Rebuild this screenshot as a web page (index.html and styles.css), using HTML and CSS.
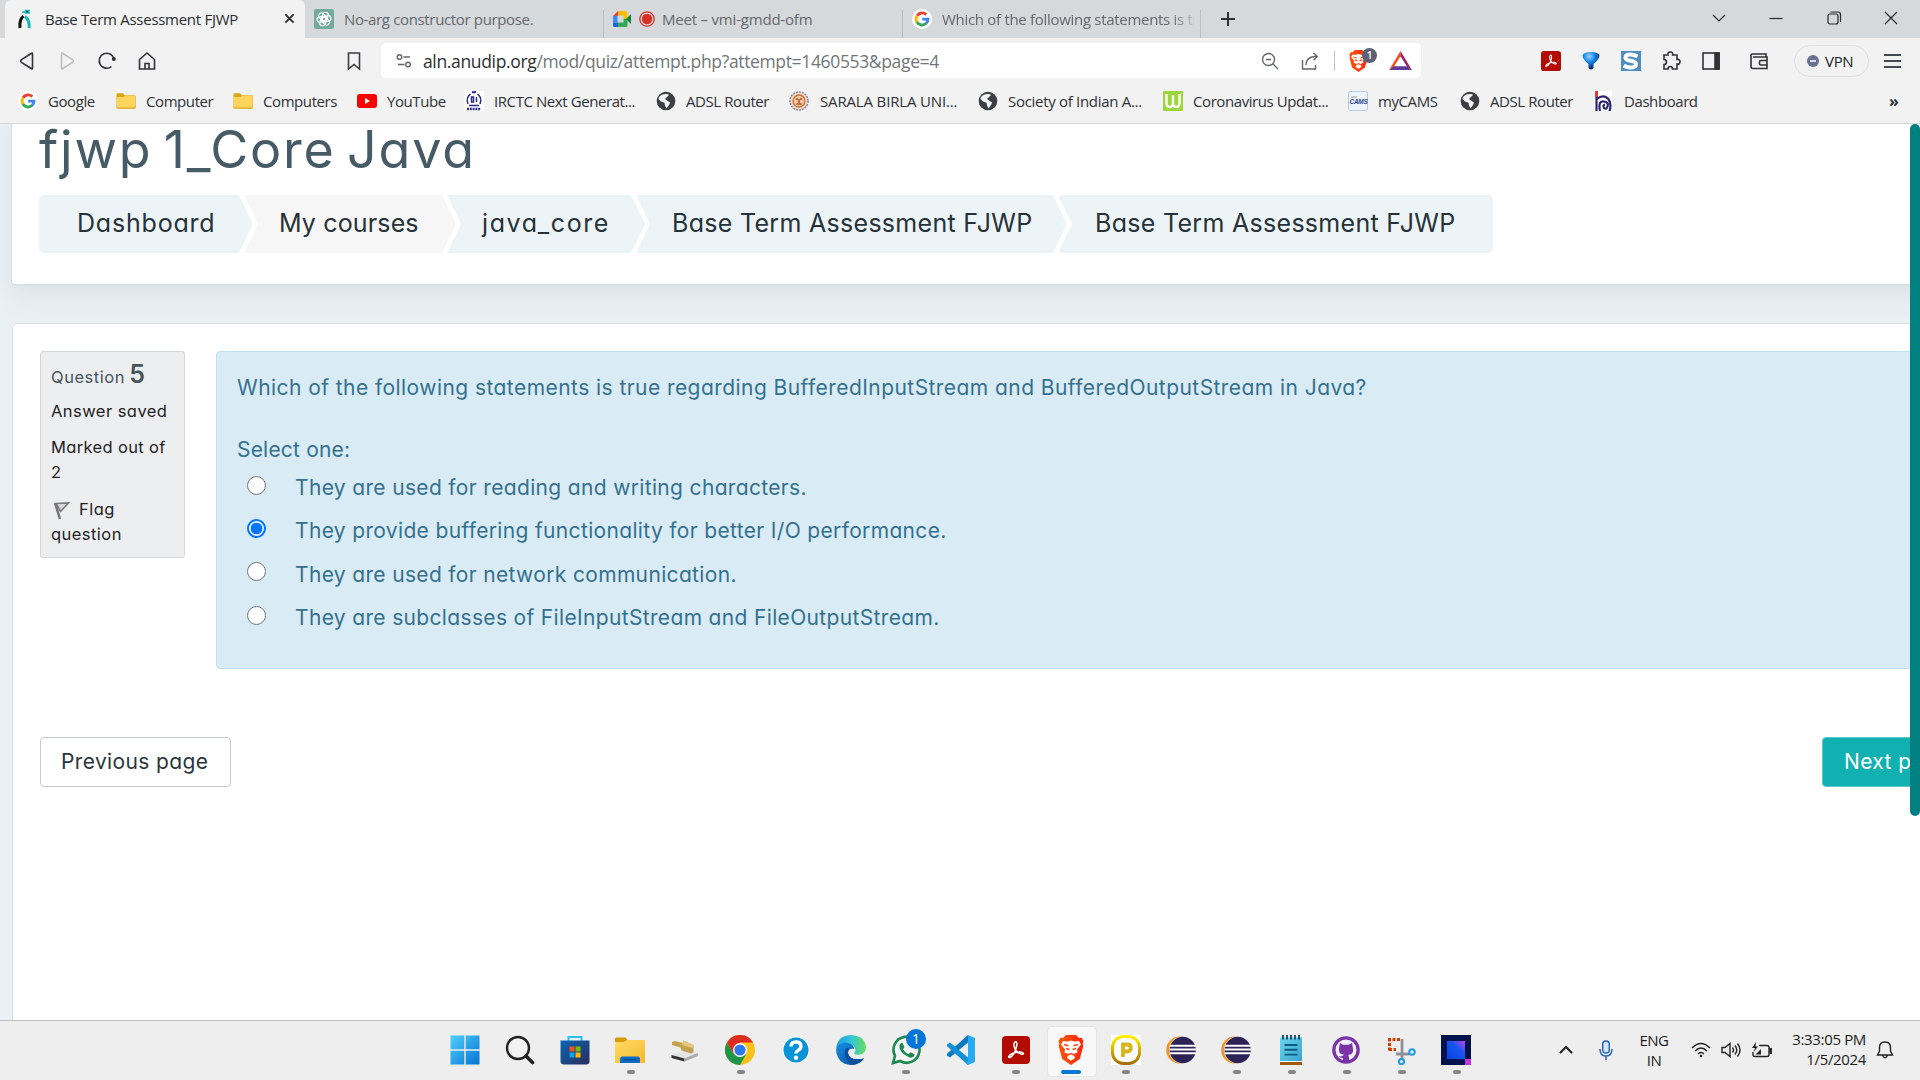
FILE: index.html
```html
<!DOCTYPE html>
<html lang="en">
<head>
<meta charset="utf-8">
<title>Base Term Assessment FJWP</title>
<link rel="stylesheet" href="styles.css">
</head>
<body>
<svg class="defs" aria-hidden="true">
  <defs>
    <linearGradient id="gWin" x1="0" y1="0" x2="1" y2="1"><stop offset="0" stop-color="#4fd0fb"/><stop offset="1" stop-color="#0573d3"/></linearGradient>
    <linearGradient id="gFold" x1="0" y1="0" x2="1" y2="1"><stop offset="0" stop-color="#ffdc68"/><stop offset="1" stop-color="#f6b92c"/></linearGradient>
    <linearGradient id="gStore" x1="0" y1="0" x2="1" y2="1"><stop offset="0" stop-color="#0b66b4"/><stop offset="1" stop-color="#2a2c58"/></linearGradient>
    <linearGradient id="gBrave" x1="0" y1="0" x2="1" y2="0"><stop offset="0" stop-color="#ff5601"/><stop offset="1" stop-color="#ff2410"/></linearGradient>
    <linearGradient id="gEdge" x1="0" y1=".3" x2="1" y2=".3"><stop offset="0" stop-color="#1c9be0"/><stop offset=".5" stop-color="#33c3dc"/><stop offset="1" stop-color="#68e05a"/></linearGradient>
    <linearGradient id="gEdge2" x1="0" y1="0" x2="1" y2="1"><stop offset="0" stop-color="#1690e0"/><stop offset="1" stop-color="#0c479c"/></linearGradient>
    <linearGradient id="gP" x1="0" y1="0" x2="0" y2="1"><stop offset="0" stop-color="#fff000"/><stop offset="1" stop-color="#a87000"/></linearGradient>
    <linearGradient id="gNote" x1="0" y1="0" x2="1" y2="1"><stop offset="0" stop-color="#6cd6ee"/><stop offset="1" stop-color="#36a3cc"/></linearGradient>
    <linearGradient id="gBlue" x1="0" y1="1" x2="1" y2="0"><stop offset="0" stop-color="#0b3fe0"/><stop offset=".6" stop-color="#1557ee"/><stop offset="1" stop-color="#c53df0"/></linearGradient>
    <radialGradient id="gPin" cx=".4" cy=".25" r=".7"><stop offset="0" stop-color="#8fd6ff"/><stop offset=".5" stop-color="#1280e0"/><stop offset="1" stop-color="#052e6a"/></radialGradient>
  </defs>
  <symbol id="google" viewBox="0 0 20 20"><circle cx="10" cy="10" r="10" fill="#fff"/><g fill="none" stroke-width="2.9"><path d="M5 6.8A6 6 0 0 1 14.3 5.6" stroke="#ea4335"/><path d="M5 13.2A6 6 0 0 1 5 6.8" stroke="#fbbc05"/><path d="M14.2 14.3A6 6 0 0 1 4.9 13.1" stroke="#34a853"/><path d="M10.2 10.1H16A6 6 0 0 1 14 14.5" stroke="#4285f4"/></g></symbol>
  <symbol id="folder" viewBox="0 0 20 16"><path d="M.5 1.5Q.5.3 1.6.3H7l1.7 1.9h10q1 0 1 1V15q0 .8-1 .8H1.500q-1 0-1-1z" fill="#dba614"/><path d="M.8 4H7.500L9 2.600h10.200V14.500H.8z" fill="#fdd45c"/></symbol>
  <symbol id="globe" viewBox="0 0 20 20"><circle cx="10" cy="10" r="9.300" fill="#3b3f44"/><path d="M3 6Q5.500 3 9.500 3q3-.2 3.500 1L10.500 6.500 9 8l3 1.200L14.500 11 13 14l-2.500 3.500L9 14.500 8.500 11.800 5 10.500 2.500 8z" fill="#f2f2f2"/><path d="M9.500 8.200q3-1.600 6.500.8l2 2q-1 4-4 6 2-3 .5-5z" fill="#3b3f44"/></symbol>
  <symbol id="pdf" viewBox="0 0 28 28"><rect width="28" height="28" rx="4" fill="#b30b00"/><path d="M13 6c1.800-1 2.500 1.500 1.200 6-1 3.500-3.500 8-6.200 9.500-2.500.5-1.700-2.300 3.200-4.200 4.500-1.700 9.300-1.800 10.200 0 .3 1.700-3.200 1.200-6-1.300C12.800 13.500 11.800 10 12 7.500z" fill="none" stroke="#fff" stroke-width="1.500"/></symbol>
  <symbol id="lion" viewBox="0 0 26 30"><path d="M8 0h10l3 3 2.500-.2L25.500 6l-.8 3 .6 2-3.500 13L13 30 4.200 24 .7 11l.6-2-.8-3 2-3.200L5 3z" fill="url(#gBrave)"/><path d="M5 6l4.500.5 3.500-1 3.500 1L21 6l2 3.500-4 5 .5 3-4 1.500 1.500 4-4 2.800L9 23l1.500-4-4-1.500.5-3-4-5z" fill="#fff"/><path d="M6 9.500l4.500 1.300M20 9.500l-4.500 1.300M8 13.500l3.500 1M18 13.500l-3.500 1M10 20l3-1.500 3 1.500" stroke="#ff4310" stroke-width="1.500" fill="none"/></symbol>
  <symbol id="eclipse" viewBox="0 0 30 30"><circle cx="13.800" cy="15" r="13.600" fill="#f7931e"/><circle cx="16.500" cy="15" r="13.600" fill="#f0ecec"/><circle cx="16.700" cy="15" r="13.200" fill="#2c2255"/><path d="M4 10.800h26M3.500 14.500H30M3.700 18.200H30" stroke="#fff" stroke-width="2"/></symbol>
</svg>

<header class="browser">
  <div class="tabs">
    <div class="tab active">
      <svg class="fav" viewBox="0 0 16 20"><path d="M6 7Q1.500 11 2.500 19" stroke="#111" stroke-width="3" fill="none"/><path d="M7.500 7.500q5 4 4 11.500" stroke="#18b7b7" stroke-width="3" fill="none"/><path d="M4.500 3h4M8 1.500h3.500v2.500H8z" stroke="#18b7b7" stroke-width="1.600"/></svg>
      <span class="title t1">Base Term Assessment FJWP</span>
      <svg class="x" viewBox="0 0 12 12"><path d="M1.500 1.500l9 9M10.500 1.500l-9 9" stroke="#2b2d30" stroke-width="2"/></svg>
    </div>
    <div class="tab">
      <svg class="fav gpt" viewBox="0 0 20 20"><rect width="20" height="20" rx="2" fill="#74aa9c"/><g fill="none" stroke="#fff" stroke-width="1.100"><rect x="7.700" y="3" width="5.500" height="9" rx="2.700" transform="rotate(15 10 10)"/><rect x="7.700" y="3" width="5.500" height="9" rx="2.700" transform="rotate(75 10 10)"/><rect x="7.700" y="3" width="5.500" height="9" rx="2.700" transform="rotate(135 10 10)"/><rect x="7.700" y="3" width="5.500" height="9" rx="2.700" transform="rotate(195 10 10)"/><rect x="7.700" y="3" width="5.500" height="9" rx="2.700" transform="rotate(255 10 10)"/><rect x="7.700" y="3" width="5.500" height="9" rx="2.700" transform="rotate(315 10 10)"/></g></svg>
      <span class="title t2">No-arg constructor purpose.</span>
    </div>
    <div class="tab line">
      <svg class="fav meet" viewBox="0 0 19 16"><path d="M5 0v5H0z" fill="#ea4335"/><path d="M5 0h8q1.500 0 1.500 1.500V8h-4V4.500H5z" fill="#fbbc04"/><path d="M0 5h4.500v6.500H0z" fill="#4285f4"/><path d="M0 11.500h5V16H1.500Q0 16 0 14.500z" fill="#1967d2"/><path d="M5 11.500h5.500V8h4v6.500q0 1.500-1.500 1.500H5z" fill="#34a853"/><path d="M13 8l5-5v10z" fill="#188038"/></svg>
      <svg class="rec" viewBox="0 0 16 16"><circle cx="8" cy="8" r="7.200" fill="none" stroke="#d93025" stroke-width="1.300"/><circle cx="8" cy="8" r="5.200" fill="#d93025"/></svg>
      <span class="title t3">Meet – vmi-gmdd-ofm</span>
    </div>
    <div class="tab line">
      <svg class="fav goog"><use href="#google"/></svg>
      <span class="title t4">Which of the following statements is tr</span>
    </div>
    <div class="newtab"><svg viewBox="0 0 16 16"><path d="M8 1v14M1 8h14" stroke="#2d2f33" stroke-width="2"/></svg></div>
    <div class="winctl">
      <svg viewBox="0 0 16 16"><path d="M2 5l6 6 6-6" /></svg>
      <svg viewBox="0 0 16 16"><path d="M1.500 8.500h13"/></svg>
      <svg viewBox="0 0 16 16"><rect x="2" y="4" width="10" height="10" rx="2"/><path d="M4.500 2H12q2.500 0 2.500 2.500V12"/></svg>
      <svg viewBox="0 0 16 16"><path d="M2 2l12 12M14 2L2 14"/></svg>
    </div>
  </div>

  <div class="toolbar">
    <div class="nav">
      <svg viewBox="0 0 20 20"><path d="M15.500 3v14q0 1.500-1.400.5L4.500 11.300q-1.700-1.300 0-2.600L14.100 2.500q1.400-1 1.400.5z"/></svg>
      <svg class="off" viewBox="0 0 20 20"><path d="M4.500 3v14q0 1.500 1.400.5l9.600-6.200q1.700-1.300 0-2.600L5.900 2.500Q4.500 1.500 4.500 3z"/></svg>
      <svg viewBox="0 0 20 20"><path d="M14.500 15.500A7.500 7.500 0 1 1 17 8"/><circle cx="16.800" cy="8" r="2" fill="#303236" stroke="none"/></svg>
      <svg viewBox="0 0 20 20"><path d="M2.500 8.500L10 2l7.500 6.500V18h-15z"/><path d="M8 18v-5.500h4V18"/></svg>
    </div>
    <svg class="bm" viewBox="0 0 14 20"><path d="M1.500 2h11v16L7 13.500 1.500 18z"/></svg>
    <div class="address">
      <svg class="tune" viewBox="0 0 16 16"><circle cx="3.500" cy="4" r="2.300"/><path d="M7.500 4H14M2 11.500h6.500"/><circle cx="12" cy="11.500" r="2.300"/></svg>
      <span class="url"><b>aln.anudip.org</b>/mod/quiz/attempt.php?attempt=1460553&amp;page=4</span>
      <svg class="ic" viewBox="0 0 18 18"><circle cx="7.500" cy="7.500" r="6"/><path d="M12 12l5 5M5 7.500h5"/></svg>
      <svg class="ic share" viewBox="0 0 18 18"><path d="M1.500 8v9h13v-4M5 13q0-8 9-8.500h2M12.500 1l3.800 3.500-3.800 3.700"/></svg>
      <i class="sep"></i>
      <span class="shield"><svg viewBox="0 0 26 30"><use href="#lion"/></svg><em>1</em></span>
      <svg class="bat" viewBox="0 0 24 20"><path d="M12 0L0 20l5-3.500L12 5.500z" fill="#ff4a12"/><path d="M12 0l12 20-5-3.500-7-11z" fill="#9e1f63"/><path d="M0 20l5-4h14l5 4z" fill="#5f3b96"/></svg>
    </div>
    <div class="ext">
      <svg viewBox="0 0 28 28"><use href="#pdf"/></svg>
      <svg viewBox="0 0 20 20"><path d="M1.500 4.500Q2.500 1 10 1t8.500 3.500Q18.500 8 12.500 13v4q-2.500 3-5 0v-4Q1.500 8 1.500 4.500z" fill="url(#gPin)"/></svg>
      <svg viewBox="0 0 20 20"><path d="M0 0h20v20H0z" fill="#4c8dc4"/><path d="M16.500 5.500Q13 3.500 9 3.500q-4.500 0-4.500 3.200Q4.500 9 9.500 9.800q5.500.8 5.500 3.500 0 3.200-6 3.200-3.500 0-6.300-2" fill="none" stroke="#fff" stroke-width="4"/></svg>
      <svg class="st" viewBox="0 0 20 20"><path d="M3 4h4q-.7-3 2.300-3t2.300 3H16v4.500q3-.5 3 2.300t-3 2.200V18h-4.500q0-2.500-2.200-2.500T7 18H3v-4.500q2.500 0 2.500-2.500T3 8.500z"/></svg>
      <svg class="st" viewBox="0 0 20 20"><rect x="2" y="2" width="16" height="16"/><path d="M14 2h4v16h-4z" fill="#303236"/></svg>
      <svg class="st" viewBox="0 0 20 20"><path d="M17 6V3H3.500Q2 3 2 4.500v11Q2 17.500 4 17.500h14V6H4M18 9.500h-6q-1.500 0-1.500 1.500v1.500q0 1.500 1.500 1.500h6"/></svg>
    </div>
    <div class="vpn"><svg viewBox="0 0 12 12"><circle cx="6" cy="6" r="6" fill="#6b7093"/><path d="M3 6h6" stroke="#fff" stroke-width="1.500"/></svg><span>VPN</span></div>
    <svg class="menu" viewBox="0 0 18 16"><path d="M0 2h17M0 8h17M0 14h17"/></svg>
  </div>

  <nav class="bookmarks">
    <a><svg><use href="#google"/></svg>Google</a>
    <a><svg class="fo"><use href="#folder"/></svg>Computer</a>
    <a><svg class="fo"><use href="#folder"/></svg>Computers</a>
    <a><svg viewBox="0 0 20 14"><rect width="20" height="14" rx="3" fill="#f00"/><path d="M8 4l5 3-5 3z" fill="#fff"/></svg>YouTube</a>
    <a><svg viewBox="0 0 20 20"><path d="M0 0h20v20H0z" fill="#fff"/><path d="M4 13Q1.500 7 6.500 3M16 13q2.500-6-2.500-10M5 14.500h10" fill="none" stroke="#2b2a86" stroke-width="1.500"/><path d="M8 1.200h4" stroke="#2b2a86" stroke-width="2"/><path d="M7.500 6h2v5h-2zM12.500 6v5" stroke="#2b2a86" stroke-width="1.500" fill="none"/><path d="M3 18h14" stroke="#2b2a86" stroke-width="2.500" stroke-dasharray="2 .8"/></svg>IRCTC Next Generat...</a>
    <a><svg><use href="#globe"/></svg>ADSL Router</a>
    <a><svg viewBox="0 0 20 20"><circle cx="10" cy="10" r="9" fill="#f2ded0" stroke="#8f8290" stroke-width="1.600" stroke-dasharray="2 1"/><circle cx="10" cy="10" r="6" fill="#f6c79c" stroke="#c4703c" stroke-width="1.300"/><path d="M7 8h2M11 8h2M10 8v4M7.500 13h5" stroke="#b24d20" stroke-width="1.500"/></svg>SARALA BIRLA UNI...</a>
    <a><svg><use href="#globe"/></svg>Society of Indian A...</a>
    <a><svg viewBox="0 0 20 20"><rect width="20" height="20" rx="1" fill="#9bd63b"/><path d="M3.500 3v9q0 4 3.300 4T10 12V4v8q0 4 3.200 4t3.300-4V3" fill="none" stroke="#fff" stroke-width="2.400"/></svg>Coronavirus Updat...</a>
    <a><svg viewBox="0 0 20 20"><rect x=".5" y=".5" width="19" height="19" rx="2" fill="#eef4fc" stroke="#b5cbe6"/><text x="1.500" y="13" class="cams">CAMS</text><path d="M3 6h6" stroke="#999"/></svg>myCAMS</a>
    <a><svg><use href="#globe"/></svg>ADSL Router</a>
    <a><svg viewBox="0 0 20 20"><path d="M0 0h18v20H0z" fill="#fff"/><path d="M2.500 20V6M3 8q6-5 11-.5 4 5 1.500 12.500M6 20Q4 10 9.500 10.500t4 5Q12.500 19 10 17q-1.500-3 1-3.500" fill="none" stroke="#2a2472" stroke-width="2.200"/><path d="M2.500 0v6" stroke="#e53935" stroke-width="3"/></svg>Dashboard</a>
    <span class="more">»</span>
  </nav>
</header>

<main class="page">
  <section class="card head">
    <h1>fjwp 1_Core Java</h1>
    <ol class="crumbs">
      <li class="c1">Dashboard</li>
      <li class="c2">My courses</li>
      <li class="c3">java_core</li>
      <li class="c4">Base Term Assessment FJWP</li>
      <li class="c5">Base Term Assessment FJWP</li>
    </ol>
  </section>
  <section class="card body">
    <div class="que">
      <div class="info">
        <p class="no">Question <b>5</b></p>
        <p class="state">Answer saved</p>
        <p class="grade">Marked out of<br>2</p>
        <p class="flag"><svg viewBox="0 0 20 20"><path d="M4 3l5 16" stroke="#777" stroke-width="2.500"/><path d="M5 3.500l12.500-.5-8 8.500z" fill="#d5d7d8" stroke="#7a7a7a" stroke-width="1.600"/></svg>Flag<br>question</p>
      </div>
      <div class="formulation">
        <p class="qtext">Which of the following statements is true regarding BufferedInputStream and BufferedOutputStream in Java?</p>
        <p class="prompt">Select one:</p>
        <label class="opt"><i></i>They are used for reading and writing characters.</label>
        <label class="opt on"><i></i>They provide buffering functionality for better I/O performance.</label>
        <label class="opt"><i></i>They are used for network communication.</label>
        <label class="opt"><i></i>They are subclasses of FileInputStream and FileOutputStream.</label>
      </div>
    </div>
    <div class="actions">
      <button class="btn prev">Previous page</button>
      <button class="btn next">Next page</button>
    </div>
  </section>
  <div class="scrollbar"></div>
</main>

<footer class="taskbar">
  <div class="apps">
    <span><svg viewBox="0 0 30 30"><path d="M.5.500h13.800v13.800H.5zM15.700.500h13.800v13.800H15.700zM.5 15.700h13.800v13.800H.5zM15.700 15.700h13.800v13.800H15.700z" fill="url(#gWin)"/></svg></span>
    <span><svg viewBox="0 0 30 30" fill="none" stroke="#222"><circle cx="13" cy="13" r="11" fill="#f2f2f2" stroke-width="2.400"/><path d="M21 21l6.500 6.500" stroke-width="3.600" stroke-linecap="round"/></svg></span>
    <span><svg viewBox="0 0 30 30"><path d="M8.500 7V2h13v5" fill="none" stroke="#2bc0f4" stroke-width="2"/><path d="M.5 5.500h29V26q0 3.500-3.500 3.500H4Q.5 29.500.5 26z" fill="url(#gStore)"/><path d="M9.500 11.500h5v5h-5z" fill="#f25022"/><path d="M15.500 11.500h5v5h-5z" fill="#7fba00"/><path d="M9.500 17.500h5v5h-5z" fill="#00a4ef"/><path d="M15.500 17.500h5v5h-5z" fill="#ffb900"/></svg></span>
    <span class="run"><svg viewBox="0 0 30 30"><path d="M0 4q0-1.500 1.500-1.500h9L13 5.500V9H0z" fill="#d99a09"/><path d="M0 7h9l3-2h17q1 0 1 1v22H0z" fill="url(#gFold)"/><path d="M5 28v-4q0-2.500 2.500-2.500h15q2.500 0 2.500 2.500v4z" fill="#0a6bc4"/><path d="M8.500 24.700h13" stroke="#084a8c" stroke-width="1.200"/></svg></span>
    <span><svg viewBox="0 0 30 30"><path d="M1.500 20l13-4.500 13.500 2.500-13 6z" fill="#e3e3e3"/><path d="M1.500 20v3l13 3.500v-3z" fill="#333"/><path d="M14.500 26.500v-3L28 18v3z" fill="#aaa"/><path d="M2 7l3-1 8 2V5.500l10.500 4.500v7l-2 1.500-10-3-1-3L2 10z" fill="#c4a14e"/><path d="M13 5.500L23.500 10v3.500L12 10z" fill="#e3c87e"/></svg></span>
    <span class="run"><svg viewBox="0 0 30 30"><circle cx="15" cy="15" r="15" fill="#fbc116"/><path d="M2 7.500A15 15 0 0 0 15 30l6.500-11.300H8.500z" fill="#1e9547"/><path d="M2 7.500A15 15 0 0 1 28 7.500H15L8.500 18.700z" fill="#de2c20"/><circle cx="15" cy="15" r="7" fill="#fff"/><circle cx="15" cy="15" r="5.600" fill="#2f79ee"/></svg></span>
    <span><svg viewBox="0 0 30 30"><circle cx="15" cy="15" r="13.500" fill="#fff"/><circle cx="15" cy="15" r="12.500" fill="#0693d8"/><path d="M10 11.500q0-4.500 5-4.500t5 4.200q0 2.300-2.600 4-2.400 1.500-2.400 3.300" fill="none" stroke="#fff" stroke-width="3.400"/><circle cx="15" cy="22.800" r="2.200" fill="#fff"/></svg></span>
    <span><svg viewBox="0 0 30 30"><path d="M0 14Q1.500 0 15.500 0 29 1 30 12q0 7-7 7.800-4.500 0-5-1.300 3-3.500-.5-7.500Q8 4 0 14z" fill="url(#gEdge)"/><path d="M0 14Q4 6 12.500 8q5.500 1.700 5.500 6-6-1-6 4 1 8 16 5.500Q23 30 15 30 1 29 0 14z" fill="url(#gEdge2)"/><path d="M9.500 14q-3.500 9 6 16 8 0 12.500-6.500-14 4-16-5.500-.1-3 1.500-4.500-3-1-4 .5z" fill="#0d4f9f"/></svg></span>
    <span class="run wa"><svg viewBox="0 0 30 30"><path d="M2 28l2-7.200A13 13 0 1 1 9 26z" fill="#f5f5f5" stroke="#1a8a50" stroke-width="2.600"/><path d="M9.500 8.500l2-.7 2 4.500-1.500 2q2 3.700 5.500 5l2-2 4 2-.5 2q-2 2-5 1Q10.500 19 8.500 13q-.5-3 1-4.500z" fill="#1a8a50"/></svg><em>1</em></span>
    <span><svg viewBox="0 0 30 30"><path d="M22 0v7.500L4 22.500l-3-2v-1.700L22 0z" fill="#0a7ac2"/><path d="M22 30v-7.500L4 7.500l-3 2v1.700L22 30z" fill="#1390da"/><path d="M22 0l7 3v24l-7 3-2-1.500L22 26z" fill="#27aaf2"/></svg></span>
    <span class="run"><svg class="s28"><use href="#pdf"/></svg></span>
    <span class="run cur"><svg viewBox="0 0 26 30"><use href="#lion"/></svg></span>
    <span class="run"><svg viewBox="0 0 30 30"><path d="M0 0h30v30H0z" fill="#fff"/><rect x="1.500" y="1.500" width="27" height="27" rx="11" fill="#fff" stroke="url(#gP)" stroke-width="3"/><path d="M12 22V9.500h4.300q3.500 0 3.500 3.500t-3.500 3.500H12" fill="none" stroke="#d9b51c" stroke-width="3.800"/></svg></span>
    <span><svg><use href="#eclipse"/></svg></span>
    <span class="run"><svg><use href="#eclipse"/></svg></span>
    <span class="run"><svg viewBox="0 0 30 30"><path d="M4 2.500h22V27H4z" fill="url(#gNote)"/><path d="M4 27h22v3H4z" fill="#a2560e"/><path d="M4 26.500h22" stroke="#fff"/><path d="M8.500 10h13M8.500 14.800h13M8.500 19.600h13" stroke="#0b5d82" stroke-width="1.900"/><path d="M7 0v4.500M11 0v4.500M15 0v4.500M19 0v4.500M23 0v4.500" stroke="#12506e" stroke-width="1.900"/></svg></span>
    <span class="run"><svg viewBox="0 0 30 30"><circle cx="15" cy="15" r="13.800" fill="#7a33a8"/><circle cx="15" cy="15" r="10.500" fill="#f4effa"/><path d="M9 8l3 1.700h6L21 8l.8 4.500q1.500 7-4.600 7.500l.8 2V26h-6v-3q-3 .5-4-2 2 1 4-.5l.8-.9Q6.600 19 8.200 12.500z" fill="#7a33a8"/></svg></span>
    <span class="run"><svg viewBox="0 0 30 30"><path d="M3.500 15.500V4.500M2 4.500h13M3 14.500h7" fill="none" stroke="#d83b01" stroke-width="3" stroke-dasharray="3 1.500"/><path d="M16 4v15h7.500M16 19h-6M16 19v5" fill="none" stroke="#8d9296" stroke-width="2.800"/><circle cx="26" cy="17" r="2.700" fill="none" stroke="#1c9be6" stroke-width="2"/><circle cx="15.500" cy="26.500" r="2.600" fill="none" stroke="#1c9be6" stroke-width="2"/></svg></span>
    <span class="run"><svg viewBox="0 0 30 30"><path d="M0 0h30v30H0z" fill="#04124a"/><path d="M6 6h18v18H6z" fill="url(#gBlue)"/><path d="M24 24h6v6h-6z" fill="#c235e0"/></svg></span>
  </div>
  <div class="tray">
    <svg class="up" viewBox="0 0 14 14"><path d="M1 10l6-6 6 6"/></svg>
    <svg class="mic" viewBox="0 0 14 20"><rect x="3.700" y="1" width="6.600" height="12" rx="3.300" fill="#d7e4f5"/><path d="M1 9q0 7 6 7t6-7M7 16v4"/></svg>
    <div class="lang">ENG<br>IN</div>
    <svg class="wifi" viewBox="0 0 20 16"><path d="M1 6Q10-3 19 6M4 9Q10 3 16 9M7 12Q10 9 13 12"/><circle cx="10" cy="14" r="1.300" fill="#222" stroke="none"/></svg>
    <svg class="snd" viewBox="0 0 20 16"><path d="M1 5.500h3l5-4v13l-5-4H1zM11.500 5.500q2 2.500 0 5M14 3.500q3.500 4.500 0 9M16.500 1.500q5 6.500 0 13"/></svg>
    <svg class="pow" viewBox="0 0 22 16"><path d="M8 3.500h8q2 0 2 2v7q0 2-2 2H4q-2 0-2-2V10"/><path d="M19.700 6v6" stroke-width="2.500"/><path d="M5 0L1 6h3L2.500 10 7 4.500H4.500zM4.500 12.500L10 7v5.500z" fill="#222" stroke="none"/></svg>
    <div class="clock">3:33:05 PM<br>1/5/2024</div>
    <svg class="bell" viewBox="0 0 18 20"><path d="M1.500 15L3.500 11V7.500Q3.500 2 9 2t5.500 5.500V11l2 4zM6.500 15.500Q9 20 11.500 15.500"/></svg>
  </div>
</footer>
</body>
</html>
```
FILE: styles.css
```css
* { box-sizing: border-box; }
body { margin: 0; width: 1920px; height: 1080px; overflow: hidden; display: flex; flex-direction: column; font-family: "Open Sans", "Noto Sans", sans-serif; font-size: 15px; color: #2f3135; background: #fff; }
svg { display: block; flex: none; }
p, h1, ol { margin: 0; padding: 0; }
.defs { position: absolute; width: 0; height: 0; }

/* browser chrome */
.browser { height: 124px; background: #f2f2f2; border-bottom: 1px solid #d3d5d6; flex: none; }
.tabs { height: 38px; background: #d5d9dc; display: flex; padding-left: 5px; }
.tab { height: 38px; width: 299px; display: flex; align-items: center; padding: 0 0 1px 10px; color: #65686c; letter-spacing: -.35px; }
.tab.active { width: 300px; padding-left: 12px; background: #f2f2f2; color: #2b2d30; border-radius: 6px 6px 0 0; }
.tab.line::before { content: ""; align-self: flex-end; width: 1px; height: 28px; margin: 0 9px -1px -10px; background: #b9bdc1; }
.tab .title { white-space: nowrap; margin-left: 10px; }
.tab .t1 { letter-spacing: -.28px; margin-left: 11px; }
.tab .t4 { width: 252px; letter-spacing: -.3px; -webkit-mask-image: linear-gradient(90deg, #000 91%, transparent 102%); mask-image: linear-gradient(90deg, #000 91%, transparent 102%); }
.tab .t3 { letter-spacing: -.2px; margin-left: 7px; }
.fav { width: 17px; height: 20px; }
.gpt, .goog { width: 20px; height: 20px; }
.meet { width: 19px; height: 16px; }
.rec { width: 16px; height: 16px; margin-left: 7px; }
.x { width: 11px; height: 11px; margin-left: 46px; }
.newtab { width: 48px; padding: 1px 16px 0 19px; border-left: 1px solid #b9bdc1; align-self: flex-end; height: 28px; }
.newtab svg { width: 16px; height: 16px; }
.tabs .tab:nth-child(2) { width: 298px; padding-left: 9px; }
.tabs .tab:nth-child(4) { width: 298px; }
.winctl { margin-left: auto; display: flex; gap: 41.300px; padding: 10px 21px 0 0; }
.winctl svg { width: 16px; height: 16px; fill: none; stroke: #26282b; stroke-width: 1.200; }
.toolbar { height: 45px; display: flex; align-items: center; padding: 0 18px 0 17px; }
.nav { display: flex; gap: 20px; }
.nav svg { width: 20px; height: 20px; fill: none; stroke: #303236; stroke-width: 1.600; }
.nav .off { stroke: #bcbec0; }
.bm { width: 14px; height: 20px; margin: 0 20px 0 190px; fill: none; stroke: #3b3e42; stroke-width: 1.600; }
.address { width: 1042px; height: 35px; background: #fff; border-radius: 5px; display: flex; align-items: center; padding-left: 15px; color: #717579; }
.address svg { fill: none; stroke: #62666a; stroke-width: 1.400; }
.tune { width: 16px; height: 16px; }
.url { width: 838px; margin-left: 11px; font-size: 17.500px; letter-spacing: -.35px; white-space: nowrap; }
.url b { font-weight: 400; color: #2b2e32; }
.ic { width: 18px; height: 18px; }
.share { margin-left: 22px; }
.sep { width: 1px; height: 20px; margin: 0 13px 0 15px; background: #bfc1c4; }
.shield { position: relative; }
.shield svg { width: 21px; height: 22px; stroke: none; }
.shield em { position: absolute; left: 14px; top: -2px; width: 15px; height: 15px; border-radius: 50%; background: #5e6175; color: #fff; font: 600 10px/15px "Open Sans", sans-serif; text-align: center; }
.address .bat { width: 23px; height: 19px; margin-left: 20px; stroke: none; }
.ext { display: flex; gap: 20px; margin-left: 120px; }
.ext svg { width: 20px; height: 20px; }
.ext svg:last-child { margin-left: 8px; }
.st { fill: none; stroke: #303236; stroke-width: 1.600; }
.vpn { width: 75px; height: 32px; margin: 0 15px 0 25px; border: 1px solid #dedfe0; border-radius: 16px; display: flex; align-items: center; gap: 6px; padding-left: 12px; letter-spacing: -.4px; color: #222; }
.vpn svg { width: 12px; height: 12px; }
.menu { width: 18px; height: 16px; stroke: #45484d; stroke-width: 1.800; }
.bookmarks { height: 35px; display: grid; grid-template-columns: 98px 117px 124px 107px 192px 133px 189px 185px 185px 112px 134px 295px 30px; padding-left: 18px; align-items: center; letter-spacing: -.42px; white-space: nowrap; }
.bookmarks a { display: flex; align-items: center; gap: 10px; }
.bookmarks a:nth-child(7) { letter-spacing: -.15px; gap: 11px; }
.bookmarks a:nth-child(8) { letter-spacing: -.3px; }
.bookmarks svg { width: 20px; height: 20px; }
.bookmarks .fo { height: 16px; }
.cams { font: italic 700 6.500px "Liberation Sans", sans-serif; fill: #26448e; letter-spacing: -.3px; }
.more { font-weight: 700; font-size: 16px; }

/* course page */
.page { position: relative; flex: 1; overflow: hidden; background: #e9f1f4; font-family: Inter, "Open Sans", sans-serif; font-feature-settings: "cv11"; }
.card { background: #fff; border: 1px solid #d8e1e4; border-radius: 5px; width: 2000px; }
.head { margin: -10px 0 0 11px; height: 172px; padding: 5px 0 0 27px; border-bottom-width: 2px; box-shadow: 0 10px 28px rgba(60, 70, 75, .08); }
.head h1 { font-weight: 400; font-size: 52px; line-height: 60px; letter-spacing: 1.800px; word-spacing: -5px; color: #465b65; height: 75px; }
.crumbs { display: flex; list-style: none; color: #263238; font-size: 25px; font-weight: 380; line-height: 57px; white-space: nowrap; }
.crumbs li { height: 58px; background: #edf4f7; margin-left: -9px; padding-left: 36px; clip-path: polygon(0 0, calc(100% - 14px) 0, 100% 50%, calc(100% - 14px) 100%, 0 100%, 14px 50%); }
.crumbs .c1 { width: 214px; margin-left: 0; padding-left: 38px; letter-spacing: .800px; border-radius: 5px; clip-path: polygon(0 0, calc(100% - 14px) 0, 100% 50%, calc(100% - 14px) 100%, 0 100%); }
.crumbs .c2 { width: 212px; padding-left: 35px; letter-spacing: .150px; background: #f6f6f6; }
.crumbs .c3 { width: 198px; padding-left: 35px; letter-spacing: 1.600px; }
.crumbs .c4 { width: 431px; letter-spacing: .300px; }
.crumbs .c5 { width: 435px; padding-left: 37px; letter-spacing: .300px; border-radius: 5px; clip-path: polygon(0 0, 100% 0, 100% 100%, 0 100%, 14px 50%); }
.card.body { margin: 37px 0 0 12px; height: 760px; padding: 27px 0 0 27px; }
.que { display: flex; align-items: flex-start; gap: 31px; }
.info { width: 145px; height: 207px; padding: 12px 0 0 10px; background: #edeef0; border: 1px solid #d3d7da; border-radius: 3px; font-size: 16.500px; font-weight: 380; line-height: 25px; letter-spacing: .45px; color: #1f2325; white-space: nowrap; }
.info .no { color: #46555d; margin-bottom: 10px; height: 25px; letter-spacing: .53px; }
.info .no b { font-size: 25px; font-weight: 600; line-height: 20px; margin-left: -1px; }
.info .state { margin-bottom: 11px; }
.info .grade { margin-bottom: 12px; letter-spacing: .35px; }
.info .flag svg { display: inline-block; width: 20px; height: 20px; margin-right: 8px; vertical-align: -5px; }
.formulation { width: 1760px; height: 318px; padding: 19px 0 0 20px; background: #d9ecf5; border: 1px solid #bcdff1; border-radius: 4px; font-size: 21px; font-weight: 380; line-height: 33px; letter-spacing: .34px; color: #35708f; }
.qtext { letter-spacing: .44px; }
.prompt { margin-top: 29px; letter-spacing: .2px; }
.opt { display: flex; align-items: center; height: 43.300px; }
.opt i { width: 19px; height: 19px; margin: -5px 29px 0 10px; border: 1.500px solid #767676; border-radius: 50%; background: #fff; }
.opt.on i { border: 2px solid #0075ff; background: radial-gradient(circle, #0075ff 5.500px, #fff 6.200px); }
.actions { display: flex; margin-top: 68px; }
.btn { height: 50px; padding: 0 0 2px 20px; border: 1px solid #c4c9cc; border-radius: 4px; background: #fff; font: 380 21px Inter, sans-serif; font-feature-settings: "cv11"; letter-spacing: .38px; color: #2a363c; text-align: left; }
.prev { width: 191px; }
.next { width: 170px; margin-left: 1591px; padding-left: 21px; background: #12b1b1; border-color: #59c9c9; color: #fff; }
.scrollbar { position: absolute; right: 0; top: 0; width: 10px; height: 692px; border-radius: 5px; background: #008080; }

/* taskbar */
.taskbar { height: 60px; flex: none; background: #eee; border-top: 1px solid #bcbcbc; display: flex; padding-left: 437.500px; color: #1b1b1b; }
.apps { display: flex; }
.apps span { position: relative; width: 55.080px; height: 59px; display: flex; justify-content: center; padding-top: 14px; }
.apps svg { width: 30px; height: 30px; position: relative; }
.apps .s28 { width: 28px; height: 28px; margin-top: 1px; }
.apps .run::after { content: ""; position: absolute; left: 24px; top: 49px; width: 8px; height: 4px; border-radius: 2px; background: #868686; }
.apps .cur::before { content: ""; position: absolute; left: 4px; top: 5px; width: 48px; height: 49px; border-radius: 5px; background: #f8f8f8; border: 1px solid #e6e6e6; }
.apps .cur::after { left: 18px; width: 20px; background: #0078d4; }
.wa em { position: absolute; left: 28px; top: 8px; width: 20px; height: 20px; border-radius: 50%; background: #0275d8; color: #fff; font: 14px/20px "Open Sans", sans-serif; text-align: center; }
.tray { display: flex; align-items: center; margin-left: 75px; padding-bottom: 2px; letter-spacing: -.35px; line-height: 20px; }
.tray svg { fill: none; stroke: #222; stroke-width: 1.400; }
.tray .up { width: 14px; height: 14px; stroke-width: 2; }
.mic { width: 14px; height: 20px; margin-left: 26px; }
.tray .mic { stroke: #1d5fb4; }
.lang { width: 36px; margin-left: 23px; text-align: center; letter-spacing: -.6px; }
.wifi { width: 20px; height: 16px; margin-left: 19px; }
.snd { width: 20px; height: 16px; margin-left: 10px; }
.pow { width: 22px; height: 16px; margin-left: 10px; }
.clock { width: 82px; margin-left: 11px; padding-bottom: 1px; text-align: right; white-space: nowrap; }
.bell { width: 18px; height: 20px; margin-left: 10px; }
```
